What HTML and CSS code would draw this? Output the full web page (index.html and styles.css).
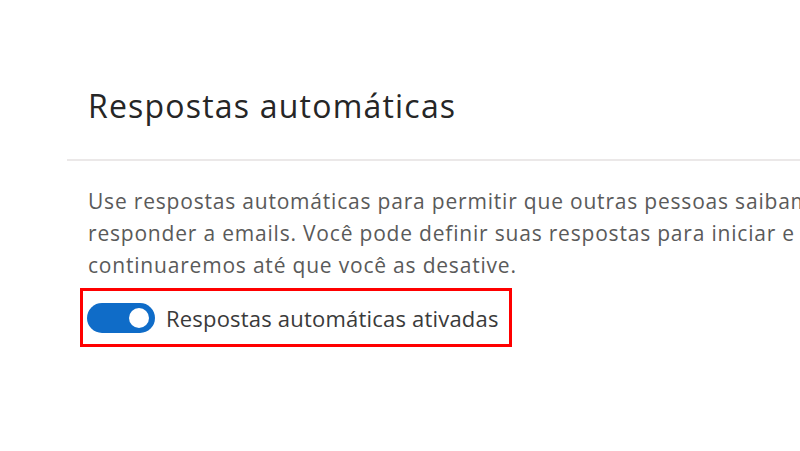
FILE: index.html
```html
<!DOCTYPE html>
<html lang="pt-BR">
<head>
    <meta charset="UTF-8">
    <meta name="viewport" content="width=device-width, initial-scale=1.0">
    <title>Respostas automáticas</title>
    <link rel="stylesheet" href="styles.css">
</head>
<body>

    <div class="panel">
        <!-- Header -->
        <div class="panel-header">
            <h1>Respostas automáticas</h1>
        </div>

        <!-- Settings -->
        <div class="panel-body">
            <p class="description">
                <span>Use respostas automáticas para permitir que outras pessoas saibam</span>
                <span>responder a emails. Você pode definir suas respostas para iniciar e t</span>
                <span>continuaremos até que você as desative.</span>
            </p>

            <div class="toggle-row">
                <label class="toggle">
                    <span class="track on"><span class="knob"></span></span>
                    <span class="toggle-label">Respostas automáticas ativadas</span>
                </label>
            </div>
        </div>
    </div>

</body>
</html>
```

FILE: styles.css
```css
body {
    font-family: "Open Sans", "Noto Sans", sans-serif;
    background-color: #ffffff;
    margin: 0;
    padding: 0;
    overflow: hidden;
}

.panel {
    padding-left: 67px;
    overflow: hidden;
}

.panel-header {
    padding: 81px 0 28px 21px;
    border-bottom: 2px solid #ebe8e8;
}

h1 {
    margin: 0;
    font-size: 32px;
    font-weight: 400;
    letter-spacing: 1.2px;
    line-height: 50px;
    color: #262626;
}

.panel-body {
    padding: 24px 0 0 21px;
}

.description {
    margin: 0;
    font-size: 21px;
    letter-spacing: 0.8px;
    line-height: 32px;
    color: #5a5a5a;
}

.description span {
    display: block;
    white-space: nowrap;
}

.toggle-row {
    display: inline-flex;
    margin: 7px 0 0 -8px;
    padding: 11px 10px 10px 4px;
    border: 3px solid #ff0000;
}

.toggle {
    display: flex;
    align-items: center;
    gap: 11px;
}

.track {
    width: 68px;
    height: 30px;
    border-radius: 15px;
    background-color: #ddd;
    display: flex;
    align-items: center;
    box-sizing: border-box;
    padding: 0 6px;
}

.track.on {
    background-color: #0f6cc8;
    justify-content: flex-end;
}

.knob {
    width: 20px;
    height: 20px;
    border-radius: 50%;
    background-color: #ffffff;
}

.toggle-label {
    font-size: 22px;
    letter-spacing: 0.2px;
    color: #3a3a3a;
    line-height: 32px;
}
```
